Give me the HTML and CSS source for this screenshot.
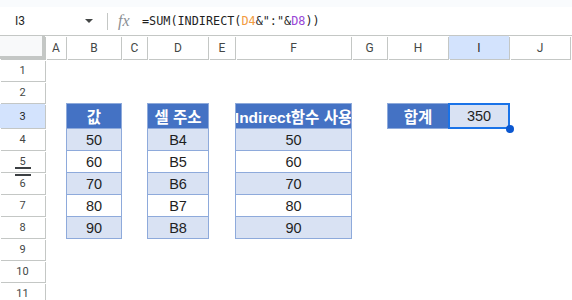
FILE: index.html
```html
<!DOCTYPE html>
<html lang="ko">
<head>
    <meta charset="UTF-8">
    <meta name="viewport" content="width=device-width, initial-scale=1.0">
    <title>INDIRECT 합계</title>
    <link rel="stylesheet" href="styles.css">
</head>
<body>
    <div class="topbar"></div>

    <div class="formula-bar">
        <div class="name-box">
            <span>I3</span>
            <span class="caret"></span>
        </div>
        <div class="divider"></div>
        <span class="fx">fx</span>
        <div class="formula">=SUM(INDIRECT(<span class="ref1">D4</span>&amp;":"&amp;<span class="ref2">D8</span>))</div>
    </div>

    <div class="sheet">
        <!-- column headers -->
        <div class="corner"></div>
        <div class="ch">A</div>
        <div class="ch">B</div>
        <div class="ch">C</div>
        <div class="ch">D</div>
        <div class="ch">E</div>
        <div class="ch">F</div>
        <div class="ch">G</div>
        <div class="ch">H</div>
        <div class="ch active">I</div>
        <div class="ch">J</div>

        <!-- row 1 -->
        <div class="rh">1</div>
        <div></div><div></div><div></div><div></div><div></div><div></div><div></div><div></div><div></div><div></div>

        <!-- row 2 -->
        <div class="rh">2</div>
        <div></div><div></div><div></div><div></div><div></div><div></div><div></div><div></div><div></div><div></div>

        <!-- row 3 -->
        <div class="rh active">3</div>
        <div></div>
        <div class="hd">값</div>
        <div></div>
        <div class="hd">셀 주소</div>
        <div></div>
        <div class="hd">Indirect함수 사용</div>
        <div></div>
        <div class="hd">합계</div>
        <div class="dl sel">350<span class="handle"></span></div>
        <div></div>

        <!-- row 4 -->
        <div class="rh">4</div>
        <div></div>
        <div class="dl">50</div>
        <div></div>
        <div class="dl">B4</div>
        <div></div>
        <div class="dl">50</div>
        <div></div><div></div><div></div><div></div>

        <!-- row 5 -->
        <div class="rh freeze">5<span class="grip"></span></div>
        <div></div>
        <div class="dw">60</div>
        <div></div>
        <div class="dw">B5</div>
        <div></div>
        <div class="dw">60</div>
        <div></div><div></div><div></div><div></div>

        <!-- row 6 -->
        <div class="rh">6</div>
        <div></div>
        <div class="dl">70</div>
        <div></div>
        <div class="dl">B6</div>
        <div></div>
        <div class="dl">70</div>
        <div></div><div></div><div></div><div></div>

        <!-- row 7 -->
        <div class="rh">7</div>
        <div></div>
        <div class="dw">80</div>
        <div></div>
        <div class="dw">B7</div>
        <div></div>
        <div class="dw">80</div>
        <div></div><div></div><div></div><div></div>

        <!-- row 8 -->
        <div class="rh">8</div>
        <div></div>
        <div class="dl">90</div>
        <div></div>
        <div class="dl">B8</div>
        <div></div>
        <div class="dl">90</div>
        <div></div><div></div><div></div><div></div>

        <!-- rows 9 - 11 -->
        <div class="rh">9</div>
        <div></div><div></div><div></div><div></div><div></div><div></div><div></div><div></div><div></div><div></div>
        <div class="rh">10</div>
        <div></div><div></div><div></div><div></div><div></div><div></div><div></div><div></div><div></div><div></div>
        <div class="rh">11</div>
        <div></div><div></div><div></div><div></div><div></div><div></div><div></div><div></div><div></div><div></div>
    </div>
</body>
</html>
```

FILE: styles.css
```css
body {
    margin: 0;
    width: 572px;
    height: 300px;
    overflow: hidden;
    background-color: white;
    font-family: Roboto, "Liberation Sans", sans-serif;
    color: #1f1f1f;
}

.topbar {
    height: 7px;
    background-color: #f9fbfd;
}

/* formula bar */
.formula-bar {
    height: 28px;
    display: flex;
    align-items: center;
}

.name-box {
    width: 93px;
    padding-left: 15px;
    box-sizing: border-box;
    display: flex;
    align-items: center;
    justify-content: space-between;
    font-size: 12px;
    color: #1f1f1f;
}

.caret {
    width: 0;
    height: 0;
    border-left: 4px solid transparent;
    border-right: 4px solid transparent;
    border-top: 4px solid #444746;
}

.divider {
    width: 1px;
    height: 17px;
    margin-left: 14px;
    background-color: #c4c7c5;
}

.fx {
    margin-left: 10px;
    width: 24px;
    font-family: "Liberation Serif", serif;
    font-style: italic;
    font-size: 16px;
    color: #8b8f94;
}

.formula {
    font-family: "DejaVu Sans Mono", monospace;
    font-size: 11.8px;
    color: #1f1f1f;
}

.ref1 {
    color: #f29b42;
}

.ref2 {
    color: #9846d6;
}

/* grid */
.sheet {
    display: grid;
    grid-template-columns: 45px 20px 54px 25px 60px 26px 115px 35px 60px 60px 60px;
    grid-template-rows: 23px 21px 21px 24px repeat(8, 21px);
    gap: 1px;
    border-top: 1px solid #c4c7c5;
    font-family: "Liberation Sans", "Noto Sans CJK KR", sans-serif;
    font-size: 14.5px;
}

.sheet > div {
    display: flex;
    align-items: center;
    justify-content: center;
    white-space: nowrap;
    overflow: hidden;
}

.corner {
    background-color: #f8f9fa;
    border-right: 3px solid #c4c7c5;
    border-bottom: 3px solid #c4c7c5;
    box-shadow: 1px 1px 0 #c4c7c5;
}

.ch,
.rh {
    font-family: Roboto, "Liberation Sans", sans-serif;
    font-size: 11px;
    color: #444746;
    box-shadow: 1px 1px 0 #c4c7c5;
}

.ch {
    font-size: 12px;
}

.ch.active,
.rh.active {
    background-color: #d3e3fd;
    color: #1f1f1f;
}

/* table cells */
.hd,
.dl,
.dw {
    box-shadow: 0 0 0 1px #8eaadb;
}

.hd {
    background-color: #4472c4;
    color: white;
    font-weight: bold;
    font-size: 15.5px;
}

.dl {
    background-color: #d9e2f3;
}

.dw {
    background-color: white;
}

.sheet > .sel {
    position: relative;
    overflow: visible;
    outline: 2px solid #1a73e8;
    outline-offset: -1px;
}

.handle {
    position: absolute;
    right: -5px;
    bottom: -5px;
    width: 8px;
    height: 8px;
    border-radius: 50%;
    background-color: #0b57d0;
    z-index: 2;
}

/* freeze grip */
.sheet > .freeze {
    position: relative;
    overflow: visible;
}

.grip {
    position: absolute;
    left: 15px;
    top: 16px;
    width: 16px;
    height: 9px;
    border-top: 2px solid #3c4043;
    border-bottom: 2px solid #3c4043;
    box-sizing: border-box;
    z-index: 2;
}
```
